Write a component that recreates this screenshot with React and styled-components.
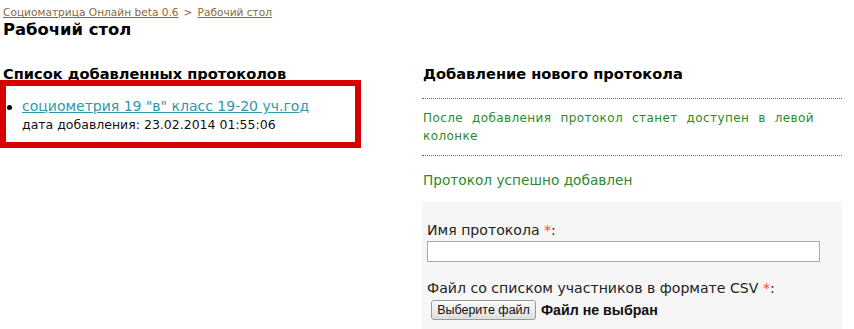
import React from "react";
import styled, { createGlobalStyle } from "styled-components";

const GlobalStyle = createGlobalStyle`
  html, body {
    margin: 0;
    padding: 0;
    background: #fff;
  }
  body {
    font-family: Verdana, "DejaVu Sans", sans-serif;
    color: #000;
  }
`;

const App = () => {
  return (
    <Page>
      <GlobalStyle />
      <Breadcrumbs>
        <Crumb href="#">Социоматрица Онлайн beta 0.6</Crumb>
        <Sep>&gt;</Sep>
        <Crumb href="#">Рабочий стол</Crumb>
      </Breadcrumbs>
      <Title>Рабочий стол</Title>
      <Columns>
        <LeftCol>
          <SectionTitle>Список добавленных протоколов</SectionTitle>
          <Highlight>
            <ProtocolList>
              <ProtocolItem>
                <ProtocolLink href="#">социометрия 19 "в" класс 19-20 уч.год</ProtocolLink>
                <AddedDate>дата добавления: 23.02.2014 01:55:06</AddedDate>
              </ProtocolItem>
            </ProtocolList>
          </Highlight>
        </LeftCol>
        <RightCol>
          <RightTitle>Добавление нового протокола</RightTitle>
          <Hint>После добавления протокол станет доступен в левой колонке</Hint>
          <Success>Протокол успешно добавлен</Success>
          <FormBox>
            <Label>
              Имя протокола <Req>*</Req>:
            </Label>
            <TextInput type="text" />
            <Label $gap>
              Файл со списком участников в формате CSV <Req>*</Req>:
            </Label>
            <FileRow>
              <FileButton type="button">Выберите файл</FileButton>
              <FileName>Файл не выбран</FileName>
            </FileRow>
          </FormBox>
        </RightCol>
      </Columns>
    </Page>
  );
};

const Page = styled.div`
  width: 854px;
  height: 329px;
  overflow: hidden;
`;

const Breadcrumbs = styled.div`
  padding: 5px 3px 0;
  font-size: 10.6px;
  line-height: 14px;
  color: #8a6a3a;
`;

const Crumb = styled.a`
  color: #8a6a3a;
  text-decoration: underline;
`;

const Sep = styled.span`
  margin: 0 5px;
`;

const Title = styled.h1`
  margin: 0;
  padding: 0 3px;
  font-size: 16.4px;
  line-height: 22px;
  font-weight: bold;
`;

const Columns = styled.div`
  display: grid;
  grid-template-columns: 1fr 420px;
  column-gap: 12px;
  padding: 0 12px 0 3px;
`;

const LeftCol = styled.div`
  display: flex;
  flex-direction: column;
`;

const RightCol = styled.div`
  display: flex;
  flex-direction: column;
`;

const SectionTitle = styled.h2`
  margin: 26px 0 0;
  font-size: 14.6px;
  line-height: 13px;
  font-weight: bold;
  white-space: nowrap;
`;

const Highlight = styled.div`
  margin-left: -3px;
  width: 361px;
  box-sizing: border-box;
  border: 6px solid #d60000;
  padding: 10px 0 8px;
`;

const ProtocolList = styled.ul`
  list-style: none;
  margin: 0;
  padding: 0 0 0 16px;
`;

const ProtocolItem = styled.li`
  position: relative;
  &::before {
    content: "";
    position: absolute;
    left: -15px;
    top: 9px;
    width: 5px;
    height: 5px;
    border-radius: 50%;
    background: #000;
  }
`;

const ProtocolLink = styled.a`
  display: block;
  font-size: 14px;
  line-height: 20px;
  color: #2f97ad;
  text-decoration: underline;
`;

const AddedDate = styled.div`
  font-size: 12.5px;
  line-height: 18px;
  color: #111;
`;

const RightTitle = styled.h2`
  margin: 26px 0 0;
  padding: 0 1px 18px;
  font-size: 14.6px;
  line-height: 13px;
  font-weight: bold;
  border-bottom: 1px dotted #1f9a1f;
`;

const Hint = styled.p`
  margin: 10px 0 0;
  padding: 0 28px 10px 1px;
  font-size: 12px;
  line-height: 18px;
  letter-spacing: 0.4px;
  text-align: justify;
  color: #2b8a2b;
  border-bottom: 1px dotted #1f9a1f;
`;

const Success = styled.div`
  margin-top: 15px;
  padding-left: 1px;
  font-size: 13.7px;
  line-height: 18px;
  color: #2b8a2b;
`;

const FormBox = styled.div`
  margin-top: 13px;
  padding: 20px 5px 20px;
  background: #f6f6f6;
`;

const Label = styled.div`
  margin-top: ${(p) => (p.$gap ? "18px" : "0")};
  font-size: 14.1px;
  line-height: 16px;
  color: #222;
`;

const Req = styled.span`
  color: #ff4a1a;
`;

const TextInput = styled.input`
  display: block;
  margin-top: 3px;
  width: 393px;
  height: 21px;
  box-sizing: border-box;
  border: 1px solid #a9a9a9;
  background: #fff;
  padding: 1px 3px;
  font-size: 13px;
  outline: none;
`;

const FileRow = styled.div`
  display: flex;
  align-items: center;
  gap: 5px;
  margin-top: 4px;
  padding-left: 4px;
`;

const FileButton = styled.button`
  height: 20px;
  width: 105px;
  padding: 0 3px;
  box-sizing: border-box;
  border: 1px solid #9a9a9a;
  border-radius: 3px;
  background: linear-gradient(#fafafa, #dedede);
  font-family: "Liberation Sans", Arial, sans-serif;
  font-size: 12.5px;
  color: #111;
  white-space: nowrap;
`;

const FileName = styled.span`
  font-family: "Liberation Sans", Arial, sans-serif;
  font-size: 14.2px;
  font-weight: bold;
  color: #111;
`;

export default App;
